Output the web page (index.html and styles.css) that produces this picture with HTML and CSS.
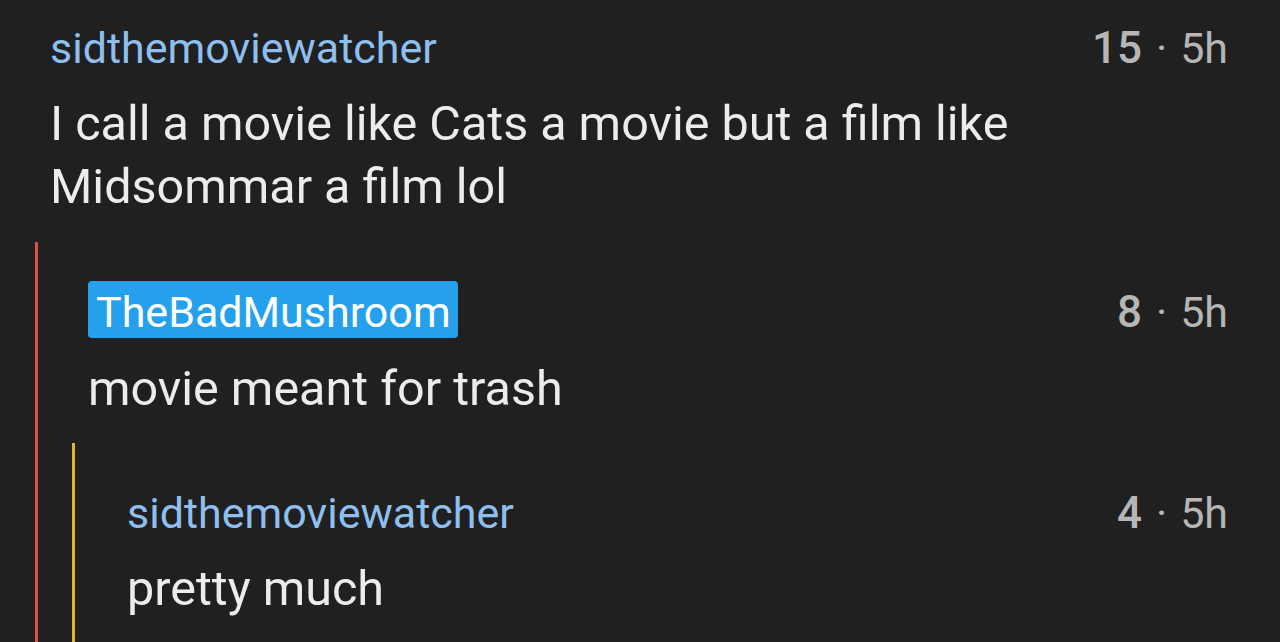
FILE: index.html
```html
<!DOCTYPE html>
<html>
<head>
<meta charset="utf-8">
<link rel="stylesheet" href="styles.css">
</head>
<body>
<div class="page">
  <div class="comment c0">
    <div class="head">
      <span class="user">sidthemoviewatcher</span>
      <span class="meta"><b class="score">15</b><span class="dot">·</span>5h</span>
    </div>
    <div class="text">I call a movie like Cats a movie but a film like Midsommar a film lol</div>
  </div>
  <div class="replies red">
    <div class="comment c1">
      <div class="head">
        <span class="user op">TheBadMushroom</span>
        <span class="meta"><b class="score">8</b><span class="dot">·</span>5h</span>
      </div>
      <div class="text">movie meant for trash</div>
    </div>
    <div class="replies yellow">
      <div class="comment c2">
        <div class="head">
          <span class="user">sidthemoviewatcher</span>
          <span class="meta"><b class="score">4</b><span class="dot">·</span>5h</span>
        </div>
        <div class="text">pretty much</div>
      </div>
    </div>
  </div>
</div>
</body>
</html>
```

FILE: styles.css
```css
html, body {
  margin: 0;
  padding: 0;
  background: #202020;
  height: 100%;
  overflow: hidden;
}
.page {
  font-family: Roboto, "Noto Sans", sans-serif;
  padding: 0 52px 0 35px;
  min-height: 642px;
  box-sizing: border-box;
  display: flex;
  flex-direction: column;
}
.comment {
  display: flex;
  flex-direction: column;
}
.head {
  display: flex;
  justify-content: space-between;
  align-items: baseline;
}
.user {
  color: #8ebfee;
  font-size: 43px;
  line-height: 48px;
}
.user.op {
  display: inline-block;
  background: #24a0ed;
  color: #ffffff;
  border-radius: 4px;
  padding: 7px 7px 2px 8px;
}
.meta {
  color: #b6b6b6;
  font-size: 43px;
  line-height: 48px;
}
.score {
  font-weight: 500;
  font-size: 44px;
}
.dot {
  margin: 0 13px 0 14px;
}
.text {
  color: #ececec;
  font-size: 48.5px;
  line-height: 63px;
  margin-top: 20px;
  max-width: 1000px;
}
.c0 {
  padding: 24px 0 0 15px;
}
.replies {
  flex: 1;
  display: flex;
  flex-direction: column;
  border-left: 3px solid;
}
.replies.red {
  border-color: #db5048;
  margin-top: 24px;
}
.replies.yellow {
  border-color: #e4b133;
  margin-left: 34px;
  margin-top: 23px;
}
.c1 {
  padding: 39px 0 0 50px;
}
.c1 .text {
  margin-top: 19px;
}
.c2 {
  padding: 46px 0 0 52px;
}
.c2 .text {
  margin-top: 20px;
}
```
